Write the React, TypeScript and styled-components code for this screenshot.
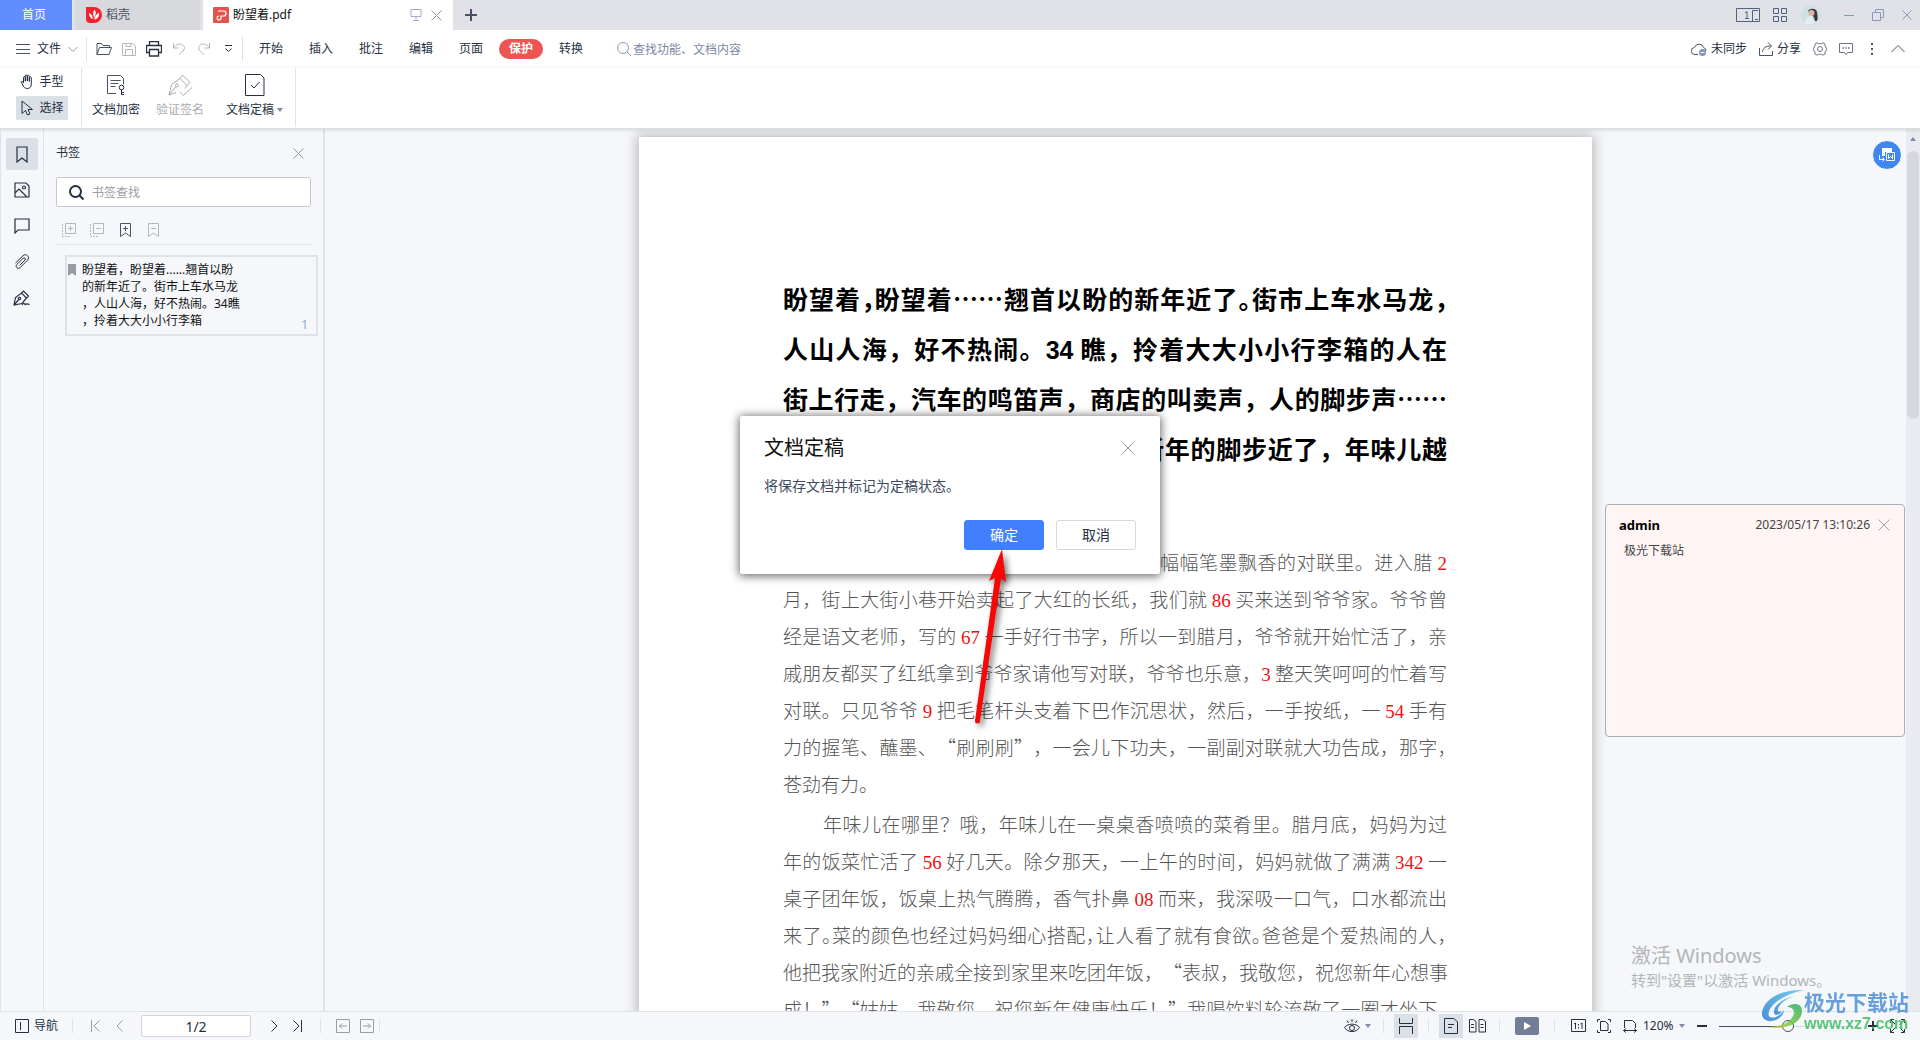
import React from "react";
import styled, { createGlobalStyle, css } from "styled-components";

const ui = `"Noto Sans", "Noto Sans CJK SC", sans-serif`;
const c = {
  ink: "#262f42",
  sub: "#7f8ba8",
  mute: "#b4b6bc",
  line: "#dfe2e8",
  canvas: "#f5f7fa",
  active: "#dbe0e7",
  blue: "#4080ff",
};

const Global = createGlobalStyle`
  * { box-sizing: border-box; }
  body { margin: 0; background: ${c.canvas}; color: ${c.ink}; font: 12px/16px ${ui}; overflow: hidden; }
  button, input, select { font: inherit; color: inherit; }
  button { border: 0; padding: 0; background: none; display: inline-flex; align-items: center; justify-content: center; white-space: nowrap; }
  p, h1, h2 { margin: 0; font-size: inherit; font-weight: inherit; }
  svg { display: block; flex: none; }
`;

/* ---------- icons ---------- */
type IconProps = { w?: number; h?: number; color?: string; children: React.ReactNode; sw?: number };
const Icon = ({ w = 14, h = 14, color = c.ink, sw = 1, children }: IconProps) => (
  <svg width={w} height={h} viewBox={`0 0 ${w} ${h}`} fill="none" stroke={color} strokeWidth={sw} aria-hidden="true">
    {children}
  </svg>
);
const Cross = ({ size = 12, color = "#8f97ab" }: { size?: number; color?: string }) => (
  <Icon w={size} h={size} color={color}>
    <path d={`M.5.5l${size - 1} ${size - 1}M${size - 0.5}.5l-${size - 1} ${size - 1}`} />
  </Icon>
);
const Caret = ({ color = c.sub }: { color?: string }) => (
  <svg width="6" height="4" viewBox="0 0 6 4" fill={color} aria-hidden="true"><path d="M0 0h6L3 4z" /></svg>
);

/* ---------- shell ---------- */
const Shell = styled.div`
  height: 100vh;
  display: flex;
  flex-direction: column;
  position: relative;
  overflow: hidden;
`;
const Row = styled.div<{ $gap?: number }>`
  display: flex;
  align-items: center;
  gap: ${(p) => p.$gap ?? 0}px;
`;
const Spacer = styled.div`flex: 1;`;
const Divider = styled.i<{ $h?: number; $m?: string }>`
  width: 1px;
  height: ${(p) => p.$h ?? 14}px;
  margin: ${(p) => p.$m ?? "0"};
  background: ${c.line};
  flex: none;
`;

/* ---------- title bar ---------- */
const TitleBar = styled.header`
  height: 30px;
  background: #e1e2e7;
  display: flex;
  align-items: stretch;
  gap: 3px;
`;
const HomeTab = styled.button`
  && { padding-right: 4px; }
  width: 72px;
  background: #628dfd;
  color: #fff;
`;
const DocTab = styled.div<{ $active?: boolean }>`
  width: ${(p) => (p.$active ? 250 : 125)}px;
  padding: 0 11px 0 ${(p) => (p.$active ? 10 : 11)}px;
  background: ${(p) => (p.$active ? "#fff" : "#d7d9dd")};
  color: ${(p) => (p.$active ? "#111" : "#4b5263")};
  display: flex;
  align-items: center;
  gap: 4px;
`;
const AddTab = styled.button`width: 30px;`;
const WindowTools = styled(Row)`padding-right: 8px;`;

/* ---------- menu ---------- */
const MenuBar = styled.nav`
  height: 38px;
  padding: 0 15px 0 16px;
  background: #fff;
  display: flex;
  align-items: center;
`;
const FileButton = styled.button`gap: 7px;`;
const QuickButton = styled.button`
  width: 25px;
  height: 24px;
`;
const MenuItem = styled.button<{ $active?: boolean }>`
  width: ${(p) => (p.$active ? 44 : 50)}px;
  height: 20px;
  ${(p) => p.$active && css`
    margin: 0 3px;
    border-radius: 10px;
    background: #ec5552;
    color: #fff;
    font-weight: 700;
  `}
`;
const MenuSearch = styled.label`
  margin-left: 21px;
  display: flex;
  align-items: center;
  gap: 2px;
`;
const PlainInput = styled.input<{ $hint: string }>`
  border: 0;
  outline: 0;
  padding: 0;
  background: none;
  min-width: 0;
  width: 140px;
  height: 18px;
  &::placeholder { color: ${(p) => p.$hint}; opacity: 1; }
`;
const LabelButton = styled.button`gap: 4px;`;

/* ---------- ribbon ---------- */
const Ribbon = styled.section`
  height: 61px;
  padding-left: 16px;
  background: #fff;
  display: flex;
  align-items: flex-start;
  border-bottom: 1px solid #dcdee2;
  box-shadow: 0 1px 4px #0002;
  position: relative;
  z-index: 1;
`;
const ModeGroup = styled.div`
  width: 65px;
  height: 59px;
  padding-top: 2px;
  display: flex;
  flex-direction: column;
  gap: 2px;
`;
const ModeButton = styled.button<{ $active?: boolean }>`
  width: 52px;
  height: 24px;
  gap: 5px;
  border-radius: 1px;
  background: ${(p) => (p.$active ? c.active : "none")};
`;
const ToolButton = styled.button<{ $off?: boolean }>`
  height: 50px;
  flex-direction: column;
  justify-content: flex-end;
  gap: 6px;
  color: ${(p) => (p.$off ? "#a9abb0" : c.ink)};
`;
const Tools = styled(Row)`padding: 0 12px 0 10px; gap: 16px;`;
const ToolSet = styled(Row)`gap: 22px;`;

/* ---------- body ---------- */
const Main = styled.main`
  flex: 1;
  min-height: 0;
  display: flex;
`;
const SideNav = styled.nav`
  width: 44px;
  padding: 9px 0 0 5px;
  border: solid ${c.line};
  border-width: 0 1px;
  display: flex;
  flex-direction: column;
  gap: 4px;
`;
const SideButton = styled.button<{ $active?: boolean }>`
  width: 32px;
  height: 32px;
  border-radius: 2px;
  background: ${(p) => (p.$active ? c.active : "none")};
`;
const Panel = styled.aside`
  width: 281px;
  padding: 16px 12px 0;
  border-right: 2px solid ${c.line};
`;
const PanelHead = styled(Row)`
  justify-content: space-between;
  padding-right: 7px;
  height: 16px;
`;
const SearchBox = styled.label`
  height: 30px;
  margin-top: 16px;
  padding-left: 12px;
  display: flex;
  align-items: center;
  gap: 8px;
  border: 1px solid #c5c8ce;
  border-radius: 2px;
  background: #fff;
`;
const PanelTools = styled(Row)`
  height: 38px;
  padding: 8px 0 0 1px;
  gap: 4px;
  border-bottom: 1px solid ${c.line};
`;
const PanelTool = styled.button`width: 24px; height: 24px;`;
const BookmarkItem = styled.article`
  margin: 10px -7px 0 9px;
  padding: 4px 8px 5px 1px;
  border: 2px solid ${c.line};
  display: grid;
  grid-template-columns: 9px 1fr auto;
  gap: 5px;
  color: #111;
  line-height: 17px;
`;
const BookmarkIcon = styled.span`padding-top: 3px;`;
const PageNo = styled.span`
  align-self: end;
  margin-bottom: -4px;
  color: #8aa9d8;
`;
const Viewer = styled.section`
  flex: 1;
  min-width: 0;
  display: grid;
  grid-template-columns: 1fr auto 1fr 14px;
  overflow: hidden;
`;
const Paper = styled.article`
  grid-column: 2;
  width: 953px;
  margin-top: 8px;
  padding: 136px 145px 0 144px;
  background: #fff;
  box-shadow: 0 0 12px 2px #0004;
`;
const Heading = styled.h1`
  font: 700 25px/50px "Noto Sans CJK SC", sans-serif;
  color: #000;
  margin-bottom: 70px;
`;
const Para = styled.p`
  font: 300 19px/37px "Noto Sans CJK SC", serif;
  color: #555;
  margin-bottom: 3px;
`;
const Line = styled.span<{ $indent?: number; $start?: boolean }>`
  display: block;
  height: 1lh;
  white-space: nowrap;
  text-spacing-trim: space-all;
  text-align-last: ${(p) => (p.$start ? "start" : "justify")};
  padding-left: ${(p) => p.$indent ?? 0}px;
`;
const Half = styled.span`
  font-feature-settings: "halt";
  line-height: 1;
`;
const Num = styled.span`
  color: #f00f0f;
  font-family: "Liberation Serif", serif;
  font-weight: 400;
  line-height: 1;
`;
const BoldNum = styled.span`
  font-family: "Liberation Sans", sans-serif;
  line-height: 1;
`;

const Notes = styled.aside`
  padding: 11px 1px 0 13px;
  display: flex;
  flex-direction: column;
`;
const Convert = styled.button`
  width: 30px;
  height: 30px;
  margin: 0 3px 334px 0;
  align-self: flex-end;
  border: 1px solid #fff;
  border-radius: 50%;
  background: #3f86f0;
  box-shadow: 0 0 2px #fff;
`;
const NoteCard = styled.article`
  height: 233px;
  padding: 12px 14px 12px 13px;
  border: 1px solid #a9adb8;
  border-radius: 4px;
  background: #fff5f4;
  color: #444;
`;
const NoteHead = styled(Row)`
  gap: 8px;
  strong { flex: 1; font-size: 13px; color: #000; }
`;
const NoteText = styled.p`padding: 10px 5px;`;
const Scroll = styled.div`
  background: #e9ebf0;
  padding: 8px 1px 8px;
  display: flex;
  flex-direction: column;
  align-items: center;
`;
const Thumb = styled.div`
  width: 12px;
  height: 268px;
  margin-top: 10px;
  border-radius: 6px;
  background: #d4d8e1;
`;

/* ---------- status bar ---------- */
const Status = styled.footer`
  height: 29px;
  padding: 0 15px;
  border-top: 1px solid ${c.line};
  display: flex;
  align-items: center;
`;
const StatusButton = styled.button<{ $active?: boolean; $w?: number }>`
  width: ${(p) => p.$w ?? 24}px;
  height: 24px;
  gap: 5px;
  background: ${(p) => (p.$active ? c.active : "none")};
`;
const PageInput = styled.input`
  width: 110px;
  height: 22px;
  margin: 0 13px 0 10px;
  border: 1px solid #d3d5da;
  border-radius: 2px;
  background: #fff;
  text-align: center;
  font-size: 14px;
`;
const Play = styled.span`
  width: 24px;
  height: 18px;
  border-radius: 2px;
  background: #727e98;
  display: flex;
  align-items: center;
  justify-content: center;
`;
const ZoomSelect = styled.select`
  appearance: none;
  border: 0;
  padding: 0;
  width: 36px;
  background: none;
`;
const Range = styled.input`
  appearance: none;
  width: 138px;
  height: 14px;
  margin: 0 11px 0 0;
  background: linear-gradient(90deg, #454e66 50%, #d5d8e0 50%) center / 100% 1px no-repeat;
  &::-webkit-slider-thumb {
    appearance: none;
    width: 12px;
    height: 12px;
    border: 1px solid #454e66;
    border-radius: 50%;
    background: #fff;
  }
`;

/* ---------- overlays ---------- */
const Dialog = styled.div`
  position: absolute;
  z-index: 3;
  top: 416px;
  left: 50%;
  margin-left: -220px;
  width: 420px;
  padding: 20px 24px 24px;
  background: #fff;
  border-radius: 2px;
  box-shadow: 0 1px 10px 1px #0009;
`;
const DialogHead = styled(Row)`
  justify-content: space-between;
  padding-right: 2px;
  h2 { font-size: 20px; line-height: 24px; color: #111; }
`;
const DialogText = styled.p`
  margin: 16px 0 24px;
  font-size: 14px;
  line-height: 20px;
  color: #414a60;
`;
const DialogActions = styled(Row)`justify-content: flex-end; gap: 12px;`;
const DialogButton = styled.button<{ $primary?: boolean }>`
  width: 80px;
  height: 30px;
  border-radius: 3px;
  border: 1px solid ${(p) => (p.$primary ? c.blue : "#d6d8dc")};
  background: ${(p) => (p.$primary ? c.blue : "#fff")};
  color: ${(p) => (p.$primary ? "#fff" : c.ink)};
  font-size: 14px;
`;
const Arrow = styled.svg`
  position: absolute;
  z-index: 4;
  top: 546px;
  left: 50%;
  filter: drop-shadow(3px 3px 3px #0008);
`;
const Activate = styled.div`
  position: absolute;
  right: 86px;
  bottom: 49px;
  width: 203px;
  color: #b2b5b9;
  font-size: 15px;
  line-height: 22px;
  white-space: nowrap;
  h2 { font-size: 20px; line-height: 26px; }
`;
const SiteMark = styled.div`
  position: absolute;
  z-index: 5;
  right: 11px;
  bottom: 6px;
  display: flex;
  opacity: 0.85;
  pointer-events: none;
`;
const SiteText = styled.div`
  color: #4f90d6;
  font: 700 21px/26px "Noto Sans CJK SC", sans-serif;
  small {
    display: block;
    color: #3fbf63;
    font: 700 16px/20px "Liberation Sans", sans-serif;
  }
`;

const Chevron = ({ d, color = c.ink, w = 9 }: { d: string; color?: string; w?: number }) => (
  <Icon w={w} h={12} color={color}><path d={d} /></Icon>
);

export default function App() {
  return (
    <Shell>
      <Global />
      <TitleBar>
        <HomeTab>首页</HomeTab>
        <DocTab>
          <svg width="16" height="16" viewBox="0 0 16 16">
            <path fill="#f5222d" d="M0 0h8a8 8 0 1 1 0 16H4a4 4 0 0 1-4-4z" />
            <path fill="#fff" d="M8.500 2.500c1.800 2 1.700 5.500-.3 8C6.600 8 6.800 5 8.500 2.500zM3 6c2.300.8 3.700 3 4 6C4.500 11.500 2.900 9 3 6zM13 5.500c.7 3.500-1.200 6.500-4.800 7C8.800 9.500 10.500 7 13 5.500z" />
          </svg>
          稻壳
        </DocTab>
        <DocTab $active>
          <svg width="16" height="16" viewBox="0 0 16 16">
            <rect width="16" height="16" rx="1" fill="#e5534f" />
            <path d="M5 4h5.500a2.500 2.500 0 0 1 0 5H8v1.500A2 2 0 1 1 6 9" fill="none" stroke="#fff" strokeWidth="1.200" />
          </svg>
          盼望着.pdf
          <Spacer />
          <Row $gap={9}>
            <Icon w={12} h={12} color="#9fabc6"><path d="M1 .5h10v7H1zM6 7.500v4M3 11.500h6" /></Icon>
            <Cross size={11} />
          </Row>
        </DocTab>
        <AddTab aria-label="新建"><Icon w={12} h={12} sw={2} color="#46506a"><path d="M6 0v12M0 6h12" /></Icon></AddTab>
        <Spacer />
        <WindowTools>
          <Row $gap={14}>
            <Row $gap={13}>
              <Icon w={24} h={14} color="#52617f">
                <path d="M.5.5h23v13H.5zM22 2.500h-5.500v11M19 11.500h3M9 5l2-1.500v7M9 10.500h4" />
              </Icon>
              <Icon color="#52617f"><path d="M.5.5h5v5h-5zM8.500.5h5v5h-5zM.5 8.500h5v5h-5zM8.500 8.500h5v5h-5z" /></Icon>
            </Row>
            <svg width="20" height="20" viewBox="0 0 20 20">
              <circle cx="10" cy="10" r="10" fill="#cfe0e4" />
              <path d="M7 6c2-3 8-3 9 1 .6 4 1 6 0 9h-2c-1-4-2-6-4-7z" fill="#3d353c" />
              <circle cx="10.500" cy="8" r="3" fill="#dcb5a4" />
              <path d="M4 19c0-5 3-8 7-8l2 8z" fill="#e3eef3" />
            </svg>
          </Row>
          <Divider $h={20} $m="0 12px 0 10px" />
          <Row $gap={18}>
            <Icon w={10} color="#8a98ba"><path d="M0 7.500h10" /></Icon>
            <Icon w={12} h={12} color="#8a98ba"><path d="M.5 3.500h8v8h-8zM3.500 3.500v-3h8v8h-3" /></Icon>
            <Cross size={10} color="#8a98ba" />
          </Row>
        </WindowTools>
      </TitleBar>

      <MenuBar>
        <FileButton>
          <Icon color="#4b5263"><path d="M0 2.500h14M0 7.500h14M0 11.500h14" /></Icon>
          文件
          <Chevron w={10} color="#8f97a8" d="M.5 4l4.500 4.500L9.500 4" />
        </FileButton>
        <Divider $h={24} $m="0 4px 0 8px" />
        <QuickButton aria-label="打开"><Icon w={16} color="#4b5263"><path d="M1 12.500V1.500h4.500l1.500 2h6.500v2M1 12.500l2.500-7h12l-2.500 7z" /></Icon></QuickButton>
        <QuickButton aria-label="保存"><Icon color={c.mute}><path d="M.5 1.500h10l3 2.500v9.500H.5zM3.500 13V7.500h7V13M4 1.500v3h5v-3" /></Icon></QuickButton>
        <QuickButton aria-label="打印"><Icon w={16} h={16}><path d="M3.500 4.500V.5h9v4M3.500 11.500h-3v-7h15v7h-3M3.500 8.500h9v6.500h-9z" strokeWidth="1.300" /></Icon></QuickButton>
        <QuickButton aria-label="撤销"><Icon color={c.mute}><path d="M1.500 1v5h5M1.500 6C4 1.500 9 1 11.500 3.500c2.500 3-.5 6-4.500 9" /></Icon></QuickButton>
        <QuickButton aria-label="重做"><Icon color={c.mute}><path d="M12.500 1v5h-5M12.500 6C10 1.500 5 1 2.500 3.500c-2.500 3 .5 6 4.500 9" /></Icon></QuickButton>
        <QuickButton aria-label="更多"><Icon w={9} h={8}><path d="M1 .5h7M1.500 3.500l3 3 3-3" /></Icon></QuickButton>
        <Divider $h={24} $m="0 3px 0 1px" />
        {["开始", "插入", "批注", "编辑", "页面", "保护", "转换"].map((t) => (
          <MenuItem key={t} $active={t === "保护"}>{t}</MenuItem>
        ))}
        <MenuSearch>
          <Icon color="#8f9ab3"><circle cx="6" cy="6" r="5.500" /><path d="M10 10l4 4" /></Icon>
          <PlainInput $hint="#7c88a3" aria-label="查找" placeholder="查找功能、文档内容" />
        </MenuSearch>
        <Spacer />
        <Row $gap={12}>
          <LabelButton>
            <svg width="16" height="14" viewBox="0 0 16 14" fill="none" stroke="#4b5263">
              <path d="M7 12.500H4A3.500 3.500 0 0 1 3.500 5.500a4.800 4.800 0 0 1 9.200.2A3 3 0 0 1 15 9" />
              <circle cx="11.500" cy="10.500" r="3.500" fill="#8494b8" stroke="none" />
              <path d="M9.500 10.500h4" stroke="#fff" />
            </svg>
            未同步
          </LabelButton>
          <LabelButton>
            <Icon color="#4b5263"><path d="M.5 6v7.500h13V9M3.500 10c.5-4 3-6 8.500-6M9 .5L12.500 4 9 7.500" /></Icon>
            分享
          </LabelButton>
          <button aria-label="设置"><Icon color="#6c7383"><path d="M4 .8l1.500.9h3L10 .8l1.800 1L12 3.800l1.500 2.400v1.600L12 10.200l-.2 2-1.800 1-1.500-.9h-3l-1.500.9-1.800-1-.2-2L.5 7.800V6.200L2 3.800l.2-2z" /><circle cx="7" cy="7" r="2.500" /></Icon></button>
          <button aria-label="消息"><Icon color="#6c7383"><path d="M.5 1.500h13v9H8.500l-1.500 2-1.500-2H.5z" /><path d="M3.500 6h1.500M6.200 6h1.500M9 6h1.500" strokeWidth="1.500" /></Icon></button>
          <button aria-label="更多选项"><Icon color="#4b5263"><path d="M7 1v2M7 6v2M7 11v2" strokeWidth="2" /></Icon></button>
          <button aria-label="折叠"><Icon color="#4b5263"><path d="M.5 10L7 3.500 13.500 10" /></Icon></button>
        </Row>
      </MenuBar>

      <Ribbon>
        <ModeGroup>
          <ModeButton>
            <Icon h={16}>
              <path d="M3.500 9V3.500c0-1.300 1.800-1.300 1.800 0V7.500M5.300 7V2c0-1.300 2-1.300 2 0v5M7.300 7V2.200c0-1.300 2-1.300 2 0V7.500M9.300 7.500V3.800c0-1.300 2-1.300 2 0V10c0 3-1.500 4.500-4 4.500-2.600 0-3.500-1.500-4.500-3.500L1.300 8.500c-.5-1.200.7-1.700 1.400-.8L3.500 9" />
            </Icon>
            手型
          </ModeButton>
          <ModeButton $active>
            <Icon h={16}><path d="M2 1v12.500l3.500-3 2 4.500 2.500-1-2-4.500h4.500z" /></Icon>
            选择
          </ModeButton>
        </ModeGroup>
        <Divider $h={59} />
        <Tools>
          <ToolButton>
            <Icon w={20} h={22} color="#4b5263">
              <path d="M10 19.500H1.500v-18h13l3 3v6M4.500 6.500h10M4.500 9.500h8M4.500 12.500h5" />
              <g stroke={c.ink}><circle cx="15.500" cy="13.500" r="2.300" /><path d="M15.500 16v5M15.500 18.500h2.500M15.500 20.500h2.500" /></g>
            </Icon>
            文档加密
          </ToolButton>
          <ToolSet>
            <ToolButton $off>
              <Icon w={24} h={22} color="#a9abb0">
                <path d="M1 21L3.500 10.500 12 4.500l7 7-2 3M1 21l7-2.500M1 21l7-8.500" />
                <circle cx="9" cy="11.500" r="1.500" />
                <path d="M12 4.500L14.500 1 22 8.500 19 11.500M12 18l3.500 3.500L24 13.500" />
              </Icon>
              验证签名
            </ToolButton>
            <ToolButton>
              <Icon w={20} h={22}><path d="M.5.5h15l3.500 3.500v17.500H.5zM6 11l3 3 5.500-6" /></Icon>
              <Row $gap={3}>文档定稿<Caret /></Row>
            </ToolButton>
          </ToolSet>
        </Tools>
        <Divider $h={59} />
      </Ribbon>

      <Main>
        <SideNav>
          <SideButton $active aria-label="书签"><Icon w={12} h={17} sw={1.2}><path d="M1 1h10v15l-5-4-5 4z" /></Icon></SideButton>
          <SideButton aria-label="缩略图"><Icon w={16} h={16} sw={1.2}><path d="M1 1h11l3 3v11H1zM1 11l4-4 8 8" /><circle cx="10" cy="5.500" r="1.500" /></Icon></SideButton>
          <SideButton aria-label="批注"><Icon w={16} h={16} sw={1.2}><path d="M1 1h14v11H4l-3 3z" /></Icon></SideButton>
          <SideButton aria-label="附件">
            <Icon w={16} h={16}>
              <path d="M5.500 11.500l5.500-5.500c1.300-1.300-.5-3-1.800-1.800L2.800 10.500c-2 2 1 5.200 3.200 3.200l7.500-7.500c3-3-1.500-7.500-4.500-4.500L1.500 9" />
            </Icon>
          </SideButton>
          <SideButton aria-label="签名"><Icon w={18} h={16} sw={1.2}><path d="M1 15l1.500-7.500 6-4.500 5 5L9 13.500zM1 15l4.500-5M8.500 3l2-2 5 5-2 2" /><circle cx="6.500" cy="8.500" r="1.200" /><path d="M9 15c2-3 3-1 3 0 1-2 3-1 4.500-.5" /></Icon></SideButton>
        </SideNav>

        <Panel>
          <PanelHead>
            <h2>书签</h2>
            <button aria-label="关闭书签"><Cross size={11} color="#9599a3" /></button>
          </PanelHead>
          <SearchBox>
            <Icon w={15} h={15} sw={2}><circle cx="6.500" cy="6.500" r="5.500" /><path d="M10.500 10.500l4 4" /></Icon>
            <PlainInput $hint="#9b9da3" aria-label="书签查找" placeholder="书签查找" />
          </SearchBox>
          <PanelTools>
            <PanelTool aria-label="展开"><Icon color={c.mute}><path d="M3.500.5h10v10h-10zM8.500 3v5M6 5.500h5" /><path d="M.5 1v12.500H9" strokeDasharray="2 1" /></Icon></PanelTool>
            <PanelTool aria-label="收起"><Icon color={c.mute}><path d="M3.500.5h10v10h-10zM6 5.500h5" /><path d="M.5 1v12.500H9" strokeDasharray="2 1" /></Icon></PanelTool>
            <PanelTool aria-label="添加书签"><Icon w={11} color="#4b5263"><path d="M.5.5h10v13l-5-3.500-5 3.500zM5.500 3v5M3 5.500h5" /></Icon></PanelTool>
            <PanelTool aria-label="删除书签"><Icon w={11} color={c.mute}><path d="M.5.5h10v13l-5-3.500-5 3.500zM3 5.500h5" /></Icon></PanelTool>
          </PanelTools>
          <BookmarkItem>
            <BookmarkIcon><svg width="8" height="12" viewBox="0 0 8 12"><path d="M0 0h8v12L4 9l-4 3z" fill="#989ba4" /></svg></BookmarkIcon>
            <p>
              盼望着，盼望着......翘首以盼<br />
              的新年近了。街市上车水马龙<br />
              ，人山人海，好不热闹。34瞧<br />
              ，拎着大大小小行李箱
            </p>
            <PageNo>1</PageNo>
          </BookmarkItem>
        </Panel>

        <Viewer>
          <Paper>
            <Heading>
              <Line>盼望着<Half>，</Half>盼望着……翘首以盼的新年近了<Half>。</Half>街市上车水马龙<Half>，</Half></Line>
              <Line>人山人海，好不热闹。<BoldNum>34</BoldNum> 瞧，拎着大大小小行李箱的人在</Line>
              <Line>街上行走，汽车的鸣笛声，商店的叫卖声，人的脚步声……</Line>
              <Line $indent={356}>新年的脚步近了，年味儿越</Line>
            </Heading>
            <Para>
              <Line $indent={377}>幅幅笔墨飘香的对联里。进入腊 <Num>2</Num></Line>
              <Line>月，街上大街小巷开始卖起了大红的长纸，我们就 <Num>86</Num> 买来送到爷爷家。爷爷曾</Line>
              <Line>经是语文老师，写的 <Num>67</Num> 一手好行书字，所以一到腊月，爷爷就开始忙活了，亲</Line>
              <Line>戚朋友都买了红纸拿到爷爷家请他写对联，爷爷也乐意，<Num>3</Num> 整天笑呵呵的忙着写</Line>
              <Line>对联。只见爷爷 <Num>9</Num> 把毛笔杆头支着下巴作沉思状，然后，一手按纸，一 <Num>54</Num> 手有</Line>
              <Line>力的握笔、蘸墨、“刷刷刷”，一会儿下功夫，一副副对联就大功告成，那字<Half>，</Half></Line>
              <Line $start>苍劲有力。</Line>
            </Para>
            <Para>
              <Line $indent={40}>年味儿在哪里？哦，年味儿在一桌桌香喷喷的菜肴里。腊月底，妈妈为过</Line>
              <Line>年的饭菜忙活了 <Num>56</Num> 好几天。除夕那天，一上午的时间，妈妈就做了满满 <Num>342</Num> 一</Line>
              <Line>桌子团年饭，饭桌上热气腾腾，香气扑鼻 <Num>08</Num> 而来，我深吸一口气，口水都流出</Line>
              <Line>来了<Half>。</Half>菜的颜色也经过妈妈细心搭配<Half>，</Half>让人看了就有食欲<Half>。</Half>爸爸是个爱热闹的人<Half>，</Half></Line>
              <Line>他把我家附近的亲戚全接到家里来吃团年饭，“表叔，我敬您，祝您新年心想事</Line>
              <Line>成！”“姑姑，我敬您，祝您新年健康快乐！”我喝饮料轮流敬了一圈才坐下<Half>，</Half></Line>
            </Para>
          </Paper>
          <Notes>
            <Convert aria-label="转换文档">
              <Icon w={16} h={14} color="#fff">
                <path d="M3 0h10v4H6v4H3z" fill="#fff" stroke="none" />
                <path d="M7.500 4.500h8v8h-8zM9.500 6.500v4l2-2 2 2v-4M.5 7v4.500H5M3.500 9.500l2 2-2 2" />
              </Icon>
            </Convert>
            <NoteCard>
              <NoteHead>
                <strong>admin</strong>
                <time>2023/05/17 13:10:26</time>
                <button aria-label="关闭批注"><Cross color="#a7a2a4" /></button>
              </NoteHead>
              <NoteText>极光下载站</NoteText>
            </NoteCard>
          </Notes>
          <Scroll>
            <svg width="6" height="4" viewBox="0 0 6 4" fill="#7f8ba8"><path d="M3 0l3 4H0z" /></svg>
            <Thumb />
            <Spacer />
            <Caret />
          </Scroll>
        </Viewer>
      </Main>

      <Status>
        <StatusButton $w={43}>
          <Icon><path d="M.5.5h13v13H.5zM5.500 3v8" /></Icon>
          导航
        </StatusButton>
        <Divider $m="0 10px 0 14px" />
        <StatusButton aria-label="第一页"><Chevron color="#9a9da5" d="M.5 0v12M8.500.5L3 6l5.500 5.500" /></StatusButton>
        <StatusButton aria-label="上一页"><Chevron color="#9a9da5" w={7} d="M6.500.5L1 6l5.500 5.500" /></StatusButton>
        <PageInput aria-label="页码" defaultValue="1/2" />
        <StatusButton $w={20} aria-label="下一页"><Chevron w={7} d="M.5.5L6 6 .5 11.500" /></StatusButton>
        <StatusButton $w={26} aria-label="最后一页"><Chevron d="M8.500 0v12M.5.5L6 6 .5 11.500" /></StatusButton>
        <Divider $m="0 10px" />
        <StatusButton aria-label="后退"><Icon color="#9a9da5"><path d="M.5.5h13v13H.5zM3 7h8M6 4.500L3.500 7 6 9.500" /></Icon></StatusButton>
        <StatusButton aria-label="前进"><Icon color="#9a9da5"><path d="M.5.5h13v13H.5zM3 7h8M8 4.500L10.500 7 8 9.500" /></Icon></StatusButton>
        <Divider />
        <Spacer />
        <StatusButton $w={26} aria-label="护眼模式">
          <Icon w={16} h={16}><path d="M.5 9.500C4 5 12 5 15.500 9.500 12 15 4 15 .5 9.500zM8 1v3M3 2.500l1.500 2.500M13 2.500L11.500 5" /><circle cx="8" cy="10" r="2.500" /></Icon>
          <Caret />
        </StatusButton>
        <Divider $m="0 10px 0 13px" />
        <StatusButton $active aria-label="连续阅读"><Icon w={16} h={16}><path d="M1.500 0v5.500h13V0M1.500 16V8.500h13V16" /></Icon></StatusButton>
        <Divider $m="0 10px" />
        <StatusButton $active aria-label="单页"><Icon w={14} h={16}><path d="M.5.5h9.500l3.500 3.500v11.500H.5zM4 6.500h6M4 9.500h4" /></Icon></StatusButton>
        <StatusButton $w={28} aria-label="双页"><Icon w={17} h={16}><path d="M.5 1.500h4l2.500 2v10.500H.5zM10 1.500h4l2.500 2v10.500H10zM2 6.500h3M2 9.500h3M11.500 6.500h3M11.500 9.500h3" /></Icon></StatusButton>
        <Divider $m="0 15px 0 8px" />
        <StatusButton aria-label="播放"><Play><svg width="7" height="8" viewBox="0 0 7 8"><path d="M0 0l7 4-7 4z" fill="#fff" /></svg></Play></StatusButton>
        <Divider $m="0 10px 0 15px" />
        <StatusButton $w={26} aria-label="实际大小"><Icon w={15}><path d="M.5.5h14v12H.5zM3 5l1.500-1v6M9.500 5L11 4v6M7.500 5v1.500M7.500 8v1.500" /></Icon></StatusButton>
        <StatusButton $w={26} aria-label="适合页面"><Icon><path d="M.5 3V.5H3M11 .5h2.500V3M13.500 11v2.500H11M3 13.500H.5V11M3.500 2.500h5l2.500 2.500v6.500H3.500z" /></Icon></StatusButton>
        <StatusButton $w={26} aria-label="适合宽度"><Icon><path d="M1.500 9V1.500h8l3 3V9M.5 11.500h13M3 9.500l-2.500 2 2.500 2M11 9.500l2.500 2-2.500 2" /></Icon></StatusButton>
        <ZoomSelect aria-label="缩放"><option>120%</option></ZoomSelect>
        <Caret />
        <StatusButton $w={34} aria-label="缩小"><Icon w={10} h={2} sw={2}><path d="M0 1h10" /></Icon></StatusButton>
        <Range type="range" aria-label="缩放比例" defaultValue={50} />
        <Row $gap={12}>
          <button aria-label="放大"><Icon w={10} h={10} sw={2}><path d="M5 0v10M0 5h10" /></Icon></button>
          <button aria-label="全屏"><Icon w={15}><path d="M.5 4V.5H4M11 .5h3.500V4M14.500 10v3.500H11M4 13.500H.5V10M1 1l4.500 4.500M14 1L9.500 5.500M1 13l4.500-4.500M14 13L9.500 8.500" /></Icon></button>
        </Row>
      </Status>

      <Dialog role="dialog" aria-labelledby="dialog-title">
        <DialogHead>
          <h2 id="dialog-title">文档定稿</h2>
          <button aria-label="关闭"><Cross color="#8b93a5" /></button>
        </DialogHead>
        <DialogText>将保存文档并标记为定稿状态。</DialogText>
        <DialogActions>
          <DialogButton $primary>确定</DialogButton>
          <DialogButton>取消</DialogButton>
        </DialogActions>
      </Dialog>
      <Arrow width="60" height="180" viewBox="-40 0 60 180" aria-hidden="true">
        <path d="M2 3L6 36l-5-3.500L-20 175a2 2 0 0 1-5 0L-5 32l-6 3z" fill="#fb0505" />
      </Arrow>
      <Activate>
        <h2>激活 Windows</h2>
        <p>转到"设置"以激活 Windows。</p>
      </Activate>
      <SiteMark>
        <svg width="42" height="44" viewBox="0 0 42 44">
          <defs>
            <linearGradient id="sky" x1="0" y1="1" x2="1" y2="0"><stop stopColor="#2c7fd0" /><stop offset="1" stopColor="#5cc6ee" /></linearGradient>
            <linearGradient id="leaf" x1="0" y1="1" x2="1" y2="0"><stop stopColor="#e5d83e" /><stop offset=".4" stopColor="#7cc84a" /><stop offset="1" stopColor="#2fae62" /></linearGradient>
          </defs>
          <path fill="url(#sky)" d="M42 2C22 1 3 9 0 24c-1 6 4 10 10 9 7-1 12-6 12-11-4 6-10 9-14 7C3 26 10 9 42 2z" />
          <path fill="url(#sky)" d="M32 8C20 11 11 18 12 25c1 3 6 2 8-2-3 1-5 1-4-2 1-5 8-10 16-13z" />
          <path fill="url(#leaf)" d="M4 39c14 1 27-6 28-14 0-4-3-6-7-6 4-4 15-5 15 4 0 11-14 20-36 16z" />
        </svg>
        <SiteText>极光下载站<small>www.xz7.com</small></SiteText>
      </SiteMark>
    </Shell>
  );
}
